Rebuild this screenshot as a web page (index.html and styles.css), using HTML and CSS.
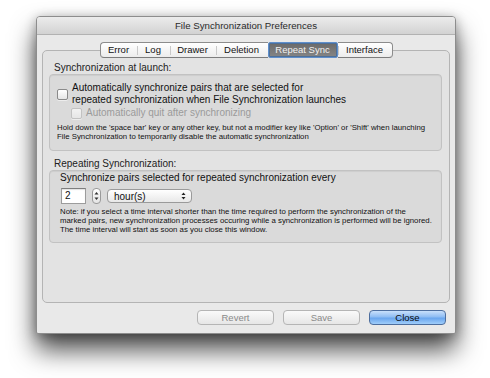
FILE: index.html
```html
<!DOCTYPE html>
<html lang="en">

<head>
    <meta charset="UTF-8">
    <title>File Synchronization Preferences</title>
    <link rel="stylesheet" href="styles.css">
</head>

<body>
    <div class="window">
        <div class="titlebar">File Synchronization Preferences</div>

        <div class="tabs">
            <span class="tab tab-error">Error</span>
            <span class="tab tab-log">Log</span>
            <span class="tab tab-drawer">Drawer</span>
            <span class="tab tab-deletion">Deletion</span>
            <span class="tab tab-repeat selected">Repeat Sync</span>
            <span class="tab tab-interface">Interface</span>
        </div>

        <div class="tabbox">
            <div class="group-label">Synchronization at launch:</div>
            <div class="group group-launch">
                <div class="check">
                    <span class="checkbox"></span>
                    <span class="check-text">Automatically synchronize pairs that are selected for<br>repeated synchronization when File Synchronization launches</span>
                </div>
                <div class="check sub disabled">
                    <span class="checkbox"></span>
                    <span class="check-text">Automatically quit after synchronizing</span>
                </div>
                <p class="hint">Hold down the 'space bar' key or any other key, but not a modifier key like 'Option' or 'Shift' when launching<br>File Synchronization to temporarily disable the automatic synchronization</p>
            </div>

            <div class="group-label second">Repeating Synchronization:</div>
            <div class="group group-repeat">
                <div class="line">Synchronize pairs selected for repeated synchronization every</div>
                <div class="controls">
                    <span class="field">2</span>
                    <span class="stepper">
                        <svg width="7" height="14" viewBox="0 0 7 14">
                            <path d="M1.5 5.5 L3.5 3 L5.5 5.5 Z" fill="#333" />
                            <path d="M1.5 8.5 L3.5 11 L5.5 8.5 Z" fill="#333" />
                        </svg>
                    </span>
                    <span class="popup">
                        <span>hour(s)</span>
                        <svg width="7" height="12" viewBox="0 0 7 12">
                            <path d="M1.5 5 L3.5 2.5 L5.5 5 Z" fill="#222" />
                            <path d="M1.5 7 L3.5 9.5 L5.5 7 Z" fill="#222" />
                        </svg>
                    </span>
                </div>
                <p class="hint">Note: if you select a time interval shorter than the time required to perform the synchronization of the<br>marked pairs, new synchronization processes occuring while a synchronization is performed will be ignored.<br>The time interval will start as soon as you close this window.</p>
            </div>
        </div>

        <div class="buttons">
            <span class="button disabled">Revert</span>
            <span class="button disabled">Save</span>
            <span class="button default">Close</span>
        </div>
    </div>
</body>

</html>
```

FILE: styles.css
```css
html {
    background: #fff;
}

body {
    box-sizing: border-box;
    min-height: 378px;
    margin: 0;
    padding: 16px 0 0 36px;
    font-family: "Liberation Sans", Arial, sans-serif;
    font-size: 10px;
    color: #111;
}

.window {
    box-sizing: border-box;
    width: 420px;
    height: 318px;
    background: #e9e9e9;
    border: 1px solid #8d8d8d;
    border-radius: 4px 4px 2px 2px;
    box-shadow: 0 16px 26px rgba(0, 0, 0, 0.7), 0 2px 12px rgba(0, 0, 0, 0.3);
}

.titlebar {
    height: 17px;
    line-height: 17px;
    font-size: 9.7px;
    text-align: center;
    color: #2a2a2a;
    background: linear-gradient(#ececec, #d2d2d2);
    border-bottom: 1px solid #b2b2b2;
    border-radius: 3px 3px 0 0;
}

/* segmented tab control */
.tabs {
    position: relative;
    z-index: 1;
    display: flex;
    justify-content: center;
    margin: 7px 0 -8px 0;
    font-size: 9.5px;
}

.tab {
    height: 14px;
    line-height: 14px;
    text-align: center;
    border-top: 1px solid #8c8c8c;
    border-bottom: 1px solid #7c7c7c;
    background: linear-gradient(#c9c9c9, #c9c9c9) left center / 1px 9px no-repeat,
        linear-gradient(#ffffff, #ececec);
    color: #111;
}

.tab-error {
    width: 36px;
    border-left: 1px solid #8c8c8c;
    border-radius: 4px 0 0 4px;
    background: linear-gradient(#ffffff, #ececec);
}

.tab-log {
    width: 33px;
}

.tab-drawer {
    width: 46px;
}

.tab-deletion {
    width: 52px;
}

.tab-repeat {
    width: 70px;
}

.tab-interface {
    width: 54px;
    border-right: 1px solid #8c8c8c;
    border-radius: 0 4px 4px 0;
}

.tab.selected {
    box-sizing: border-box;
    height: 16px;
    border: 1px solid #5f8fcc;
    border-radius: 2px;
    background: linear-gradient(#6a6a6a, #858585);
    box-shadow: inset 0 0 0 1px #4d6f98;
    color: #f2f2f2;
}

.tabbox {
    box-sizing: border-box;
    height: 253px;
    margin: 0 5px;
    padding: 11px 7px 0 6px;
    background: #e3e3e3;
    border: 1px solid #b4b4b4;
    border-radius: 5px;
}

.group-label {
    height: 12px;
    line-height: 12px;
    padding-left: 5px;
    color: #222;
}

.group-label.second {
    margin-top: 7px;
}

.group {
    box-sizing: border-box;
    background: #dadada;
    border: 1px solid #c2c2c2;
    border-radius: 4px;
    box-shadow: inset 0 1px 1px rgba(0, 0, 0, 0.06);
}

.group-launch {
    height: 77px;
    padding: 7px 7px 0 7px;
}

.group-repeat {
    height: 73px;
    padding: 1px 10px 0 10px;
}

.check {
    display: flex;
    align-items: center;
    line-height: 12px;
}

.checkbox {
    box-sizing: border-box;
    width: 11px;
    height: 11px;
    margin-right: 4px;
    border: 1px solid #8a8a8a;
    border-radius: 2px;
    background: linear-gradient(#ffffff, #e6e6e6);
    box-shadow: 0 1px 0 rgba(255, 255, 255, 0.5);
}

.check.sub {
    margin: 1px 0 0 14px;
}

.check.disabled {
    color: #9a9a9a;
}

.check.disabled .checkbox {
    border-color: #c2c2c2;
    background: linear-gradient(#f2f2f2, #e6e6e6);
}

.hint {
    margin: 0;
    font-size: 7.8px;
    line-height: 9px;
    white-space: nowrap;
    color: #111;
}

.group-launch .hint {
    margin-top: 4px;
}

.group-repeat .hint {
    margin-top: 3px;
}

.line {
    line-height: 12px;
}

.controls {
    display: flex;
    align-items: center;
    height: 16px;
    margin-top: 4px;
}

.field {
    box-sizing: border-box;
    width: 25px;
    height: 16px;
    line-height: 14px;
    padding-left: 3px;
    margin-left: 1px;
    background: #fff;
    border: 1px solid #9c9c9c;
    border-top-color: #7e7e7e;
    box-shadow: inset 0 1px 1px rgba(0, 0, 0, 0.12);
}

.stepper {
    box-sizing: border-box;
    display: flex;
    align-items: center;
    justify-content: center;
    width: 9px;
    height: 16px;
    margin-left: 6px;
    border: 1px solid #9a9a9a;
    border-radius: 4px;
    background: linear-gradient(#ffffff, #e4e4e4);
}

.popup {
    box-sizing: border-box;
    display: flex;
    align-items: center;
    justify-content: space-between;
    width: 85px;
    height: 14px;
    margin-left: 6px;
    padding: 0 4px 0 6px;
    border: 1px solid #9a9a9a;
    border-radius: 4px;
    background: linear-gradient(#ffffff, #e8e8e8);
}

.buttons {
    display: flex;
    justify-content: flex-end;
    gap: 9px;
    margin: 7px 9px 0 0;
    font-size: 9.5px;
}

.button {
    box-sizing: border-box;
    width: 77px;
    height: 15px;
    line-height: 13px;
    text-align: center;
    border: 1px solid #b5b5b5;
    border-radius: 4px;
    background: linear-gradient(#fafafa, #e6e6e6);
}

.button.disabled {
    color: #8a8a8a;
}

.button.default {
    border-color: #4d6e9e;
    background: linear-gradient(#c9e0fb 0%, #8fbdf3 45%, #6aa6ee 55%, #9fcdfa 100%);
    color: #0a0a0a;
}
```
